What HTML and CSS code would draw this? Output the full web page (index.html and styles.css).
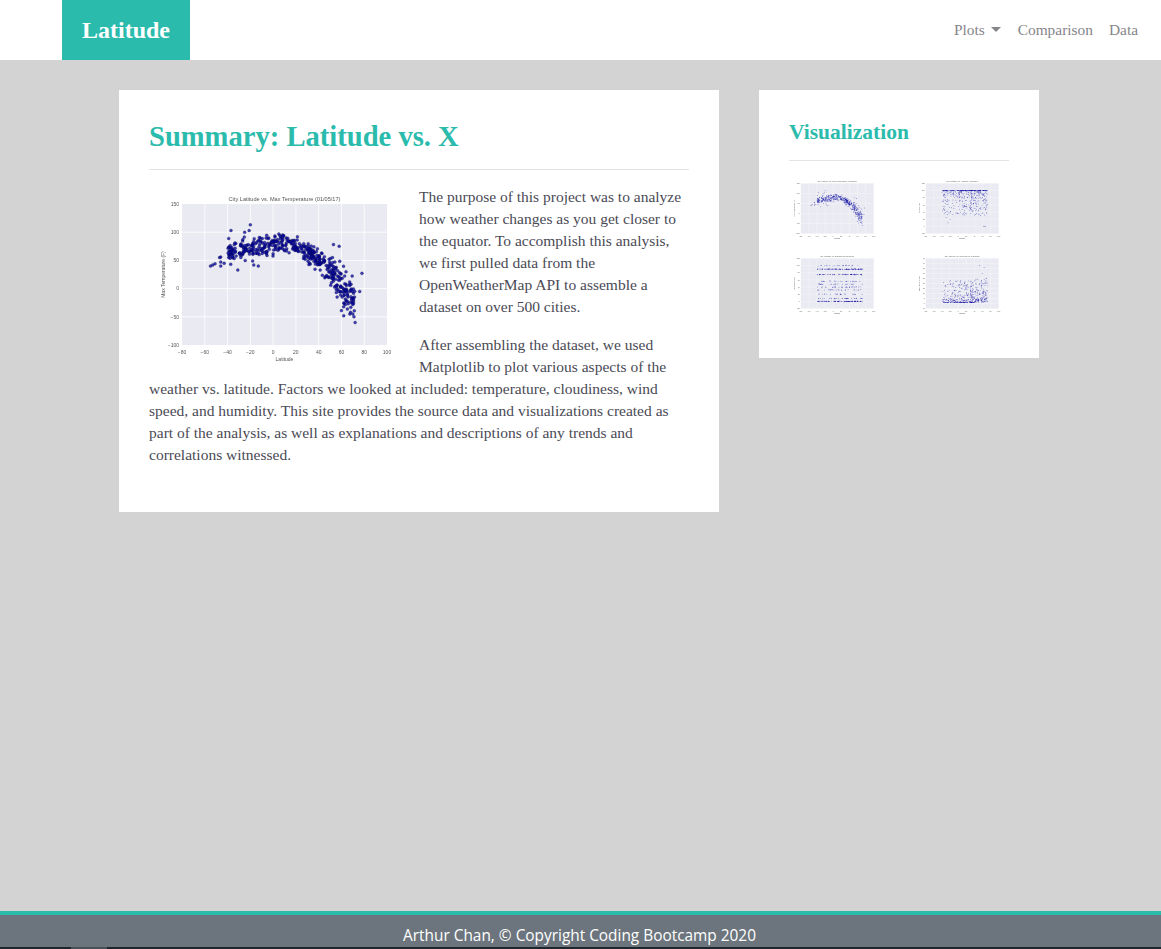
FILE: index.html
```html
<!DOCTYPE html>
<html lang="en">
<head>
<meta charset="utf-8">
<title>Latitude</title>
<link rel="stylesheet" href="styles.css">
</head>
<body>
<nav class="navbar">
  <a class="brand" href="#">Latitude</a>
  <ul class="nav-links">
    <li><a href="#">Plots<span class="caret"></span></a></li>
    <li><a href="#">Comparison</a></li>
    <li><a href="#">Data</a></li>
  </ul>
</nav>
<main class="content">
  <section class="card card-main">
    <h1>Summary: Latitude vs. X</h1>
    <hr>
    <svg class="chart chart-large" data-set="0" viewBox="0 0 250 180" role="img" aria-label="City Latitude vs. Max Temperature"></svg>
    <p>The purpose of this project was to analyze how weather changes as you get closer to the equator. To accomplish this analysis, we first pulled data from the OpenWeatherMap API to assemble a dataset on over 500 cities.</p>
    <p>After assembling the dataset, we used Matplotlib to plot various aspects of the weather vs. latitude. Factors we looked at included: temperature, cloudiness, wind speed, and humidity. This site provides the source data and visualizations created as part of the analysis, as well as explanations and descriptions of any trends and correlations witnessed.</p>
  </section>
  <aside class="card card-side">
    <h2>Visualization</h2>
    <hr>
    <div class="thumbs">
      <svg class="chart chart-thumb" data-set="0" viewBox="0 0 250 180" role="img" aria-label="Max Temperature"></svg>
      <svg class="chart chart-thumb" data-set="1" viewBox="0 0 250 180" role="img" aria-label="Humidity"></svg>
      <svg class="chart chart-thumb" data-set="2" viewBox="0 0 250 180" role="img" aria-label="Cloudiness"></svg>
      <svg class="chart chart-thumb" data-set="3" viewBox="0 0 250 180" role="img" aria-label="Wind Speed"></svg>
    </div>
  </aside>
</main>
<footer class="footer">
  <div class="footer-text">Arthur Chan, © Copyright Coding Bootcamp 2020</div>
  <div class="footer-strip"><span class="footer-thumb"></span></div>
</footer>
<script src="charts.js"></script>
</body>
</html>
```
FILE: styles.css
```css
* { box-sizing: border-box; }
html, body { height: 100%; }
body {
  margin: 0;
  height: 949px;
  overflow: hidden;
  display: flex;
  flex-direction: column;
  background: #d3d3d3;
  font-family: "Liberation Serif", "Times New Roman", serif;
  color: #4a4a55;
}
a { color: inherit; text-decoration: none; }

.navbar {
  flex: none;
  height: 60px;
  background: #fff;
  display: flex;
  justify-content: space-between;
  padding: 0 23px 0 62px;
}
.brand {
  width: 128px;
  background: #2bbbad;
  color: #fff;
  font-weight: 700;
  font-size: 24px;
  display: flex;
  align-items: center;
  justify-content: center;
}
.nav-links {
  list-style: none;
  margin: 0;
  padding: 0;
  display: flex;
  align-items: center;
  gap: 16px;
  font-size: 15.4px;
  color: #85858a;
}
.caret {
  display: inline-block;
  width: 0;
  height: 0;
  margin: 0 1px 0 6px;
  vertical-align: 3px;
  border-top: 5px solid #85858a;
  border-left: 5px solid transparent;
  border-right: 5px solid transparent;
}

.content {
  flex: 1;
  display: flex;
  align-items: flex-start;
  gap: 40px;
  padding: 30px 0 0 119px;
}
.card {
  background: #fff;
  padding: 30px;
}
.card-main { width: 600px; padding-bottom: 46px; }
.card-side { width: 280px; }

h1 {
  margin: 0 0 16px;
  padding-top: 1px;
  font-size: 28.6px;
  line-height: 32px;
  font-weight: 700;
  color: #2bbbad;
}
h2 {
  margin: 0 0 16px;
  font-size: 21.5px;
  line-height: 24px;
  font-weight: 700;
  color: #2bbbad;
}
hr {
  height: 1px;
  margin: 0 0 16px;
  border: 0;
  background: #e3e3e3;
}
p {
  margin: 0 0 16px;
  font-size: 15.5px;
  line-height: 22px;
}
p:last-child { margin-bottom: 0; }

.chart { display: block; }
.chart-large {
  float: left;
  width: 250px;
  height: 180px;
  margin-right: 20px;
  filter: blur(.45px);
}
.chart-thumb {
  width: 89px;
  height: 64px;
  filter: blur(.4px);
}
.thumbs {
  display: grid;
  grid-template-columns: 95px 95px;
  column-gap: 30px;
  row-gap: 11px;
  margin-bottom: 12px;
}

.footer {
  flex: none;
  height: 38px;
  background: #6c757d;
  border-top: 4px solid #2bbbad;
  display: flex;
  flex-direction: column;
  color: #fff;
}
.footer-text {
  height: 32px;
  padding-right: 2px;
  font-family: "Open Sans", "Noto Sans", sans-serif;
  font-size: 15.4px;
  line-height: 41px;
  text-align: center;
  white-space: nowrap;
}
.footer-strip {
  height: 2px;
  background: #1c262d;
  display: flex;
  padding-left: 71px;
}
.footer-thumb {
  width: 36px;
  background: #4a5259;
}

.chart-bg { fill: #eaeaf2; }
.chart-grid { stroke: #fff; stroke-width: .8; }
.chart-dot { fill: #0000a0; fill-opacity: .75; stroke: #10103a; stroke-width: .25; }
.chart-thumb .chart-dot { fill-opacity: .6; stroke: none; }
.chart-label { font-family: "Liberation Sans", Arial, sans-serif; fill: #555; font-size: 5px; }
.chart-title { font-size: 5.6px; }
```
FILE: charts.js
```js
(function () {
  var NS = 'http://www.w3.org/2000/svg';
  var P = { l: 33, r: 238, t: 18, b: 159 };

  function rng(seed) {
    var s = seed;
    return function () {
      s = (s * 1664525 + 1013904223) % 4294967296;
      return s / 4294967296;
    };
  }

  function gauss(r) {
    return (r() + r() + r() + r() - 2) * 1.7;
  }

  function lat(r) {
    var u = r();
    if (u < 0.25) return -40 + r() * 40;
    if (u < 0.52) return r() * 35;
    if (u < 0.95) return 30 + r() * 42;
    return -40 + r() * 112;
  }

  var SETS = [
    {
      title: 'City Latitude vs. Max Temperature (01/05/17)',
      ylabel: 'Max Temperature (F)',
      ymin: -100, ymax: 150, ystep: 50,
      extra: [[-37, 103], [-20, 113], [-21, 103], [-25, 100], [-31, 33], [-13, 40], [-18, 49], [-17, 42], [53, 78], [58, 75], [-39, 89], [-55, 40], [-53, 42], [-51, 44], [-47, 55], [-46, 56], [-46, 47], [-46, 40], [-43, 45], [78, 27], [76, -5], [72, -60], [71, -50], [70, -45], [68, -42], [62, -48], [60, -39]],
      gen: function (x, r) {
        var c = x < 5 ? 78 - (x - 5) * (x - 5) * 0.008 : 80 - (x - 5) * (x - 5) * 0.024;
        return c + gauss(r) * (x > 45 ? 16 : 9);
      }
    },
    {
      title: 'City Latitude vs. Humidity (01/05/17)',
      ylabel: 'Humidity (%)',
      ymin: -20, ymax: 120, ystep: 20,
      extra: [[62, 0], [64, 0], [66, 0], [68, 0], [-20, 20], [-30, 25], [-25, 10]],
      gen: function (x, r) {
        return r() < 0.3 ? 100 : 100 - Math.pow(r(), 1.6) * 70;
      }
    },
    {
      title: 'City Latitude vs. Cloudiness (01/05/17)',
      ylabel: 'Cloudiness (%)',
      ymin: -20, ymax: 120, ystep: 20,
      extra: [],
      gen: function (x, r) {
        var levels = [0, 0, 0, 0, 8, 20, 32, 40, 48, 56, 75, 75, 75, 90, 90, 90, 90, 100];
        return levels[Math.floor(r() * levels.length)] + gauss(r) * 0.5;
      }
    },
    {
      title: 'City Latitude vs. Wind Speed (01/05/17)',
      ylabel: 'Wind Speed (mph)',
      ymin: -5, ymax: 45, ystep: 5,
      extra: [[53, 38], [64, 36], [60, 30], [-36, 21], [-20, 19]],
      gen: function (x, r) {
        return 1 + Math.pow(r(), 2.6) * 22 + (x > 40 ? r() * 3 : 0);
      }
    }
  ];

  function el(parent, name, attrs, text) {
    var n = document.createElementNS(NS, name);
    Object.keys(attrs).forEach(function (k) { n.setAttribute(k, attrs[k]); });
    if (text !== undefined) n.textContent = text;
    parent.appendChild(n);
    return n;
  }

  function draw(svg) {
    var set = SETS[+svg.getAttribute('data-set')];
    var sx = function (x) { return P.l + (x + 80) / 180 * (P.r - P.l); };
    var sy = function (y) { return P.b - (y - set.ymin) / (set.ymax - set.ymin) * (P.b - P.t); };

    el(svg, 'rect', { 'class': 'chart-bg', x: P.l, y: P.t, width: P.r - P.l, height: P.b - P.t });

    for (var gx = -80; gx <= 100; gx += 20) {
      if (gx > -80 && gx < 100) el(svg, 'line', { 'class': 'chart-grid', x1: sx(gx), x2: sx(gx), y1: P.t, y2: P.b });
      el(svg, 'text', { 'class': 'chart-label', x: sx(gx), y: P.b + 9, 'text-anchor': 'middle' }, String(gx).replace('-', '\u2212'));
    }
    for (var gy = set.ymin; gy <= set.ymax; gy += set.ystep) {
      if (gy > set.ymin && gy < set.ymax) el(svg, 'line', { 'class': 'chart-grid', x1: P.l, x2: P.r, y1: sy(gy), y2: sy(gy) });
      el(svg, 'text', { 'class': 'chart-label', x: P.l - 3, y: sy(gy) + 1.8, 'text-anchor': 'end' }, String(gy).replace('-', '\u2212'));
    }

    el(svg, 'text', { 'class': 'chart-label chart-title', x: (P.l + P.r) / 2, y: P.t - 3, 'text-anchor': 'middle' }, set.title);
    el(svg, 'text', { 'class': 'chart-label', x: (P.l + P.r) / 2, y: P.b + 16, 'text-anchor': 'middle' }, 'Latitude');
    el(svg, 'text', { 'class': 'chart-label', 'text-anchor': 'middle', transform: 'translate(' + (P.l - 17) + ' ' + ((P.t + P.b) / 2) + ') rotate(-90)' }, set.ylabel);

    var r = rng(17 + 31 * +svg.getAttribute('data-set'));
    var radius = svg.classList.contains('chart-large') ? 1.5 : 1.3;
    for (var i = 0; i < 480; i++) {
      var x = lat(r);
      var y = set.gen(x, r);
      el(svg, 'circle', { 'class': 'chart-dot', cx: sx(x).toFixed(1), cy: sy(y).toFixed(1), r: radius });
    }
    set.extra.forEach(function (p) {
      el(svg, 'circle', { 'class': 'chart-dot', cx: sx(p[0]), cy: sy(p[1]), r: radius });
    });
  }

  Array.prototype.forEach.call(document.querySelectorAll('.chart'), draw);
})();
```
